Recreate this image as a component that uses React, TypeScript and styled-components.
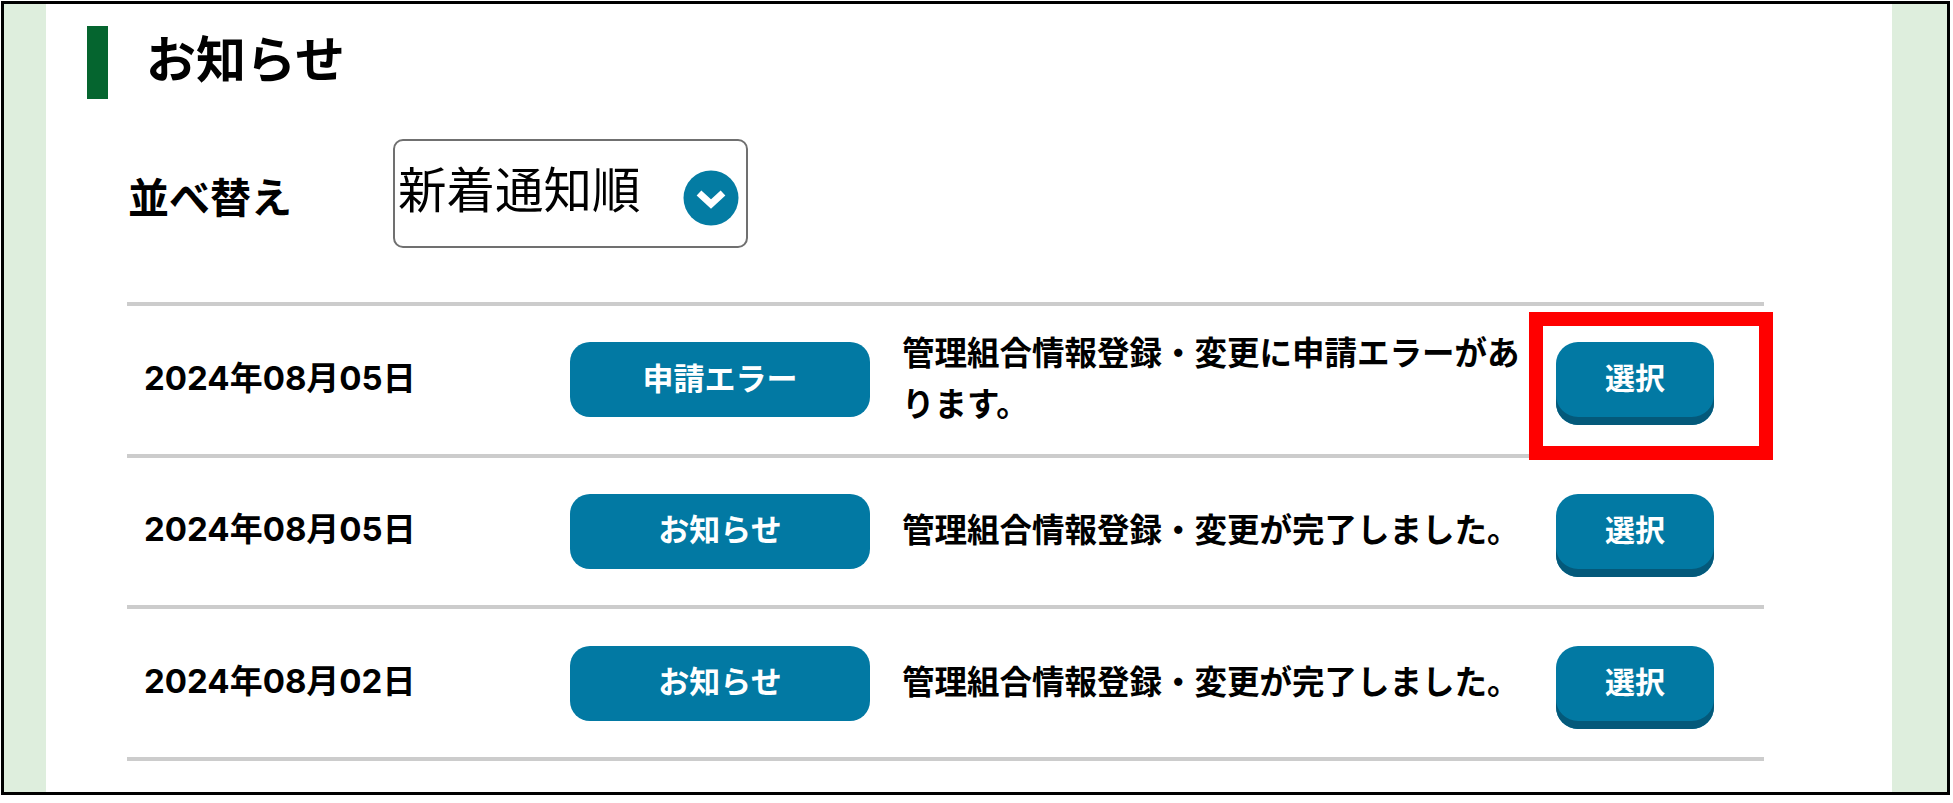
import React from "react";
import styled, { createGlobalStyle } from "styled-components";

const Global = createGlobalStyle`
  html, body { margin: 0; padding: 0; background: #fff; }
  body { font-family: "Noto Sans CJK JP", "Liberation Sans", sans-serif; color: #000; }
`;

const Frame = styled.div`
  position: relative;
  box-sizing: border-box;
  width: 1949px;
  height: 794px;
  margin: 1px 0 0 1px;
  border: 3px solid #000;
  display: flex;
  overflow: hidden;
`;

const Side = styled.div<{ $w: number }>`
  width: ${(p) => p.$w}px;
  flex: none;
  background: #deeedd;
`;

const Main = styled.main`
  flex: 1;
  min-width: 0;
  background: #fff;
  padding-top: 22px;
`;

const Heading = styled.div`
  display: flex;
  align-items: center;
  height: 73px;
  margin-left: 41px;
`;

const HeadingBar = styled.span`
  width: 21px;
  height: 73px;
  background: #05652f;
  flex: none;
`;

const Title = styled.h1`
  margin: 0 0 0 38px;
  padding-bottom: 14px;
  font-size: 50px;
  font-weight: 700;
  line-height: 1;
`;

const SortRow = styled.div`
  display: flex;
  align-items: center;
  margin: 40px 0 0 82px;
`;

const SortLabel = styled.span`
  width: 265px;
  padding-top: 4px;
  font-size: 41px;
  font-weight: 700;
  line-height: 1;
`;

const Select = styled.div`
  box-sizing: border-box;
  width: 355px;
  height: 109px;
  border: 2px solid #707070;
  border-radius: 10px;
  display: flex;
  align-items: center;
  padding: 0 7px 0 3px;
  justify-content: space-between;
`;

const SelectText = styled.span`
  font-size: 48.5px;
  font-weight: 400;
  line-height: 1;
  padding-bottom: 12px;
`;

const Chevron = styled.svg`
  width: 56px;
  height: 56px;
  flex: none;
  margin-top: 8px;
`;

const List = styled.ul`
  list-style: none;
  width: 1637px;
  margin: 54px 0 0 81px;
  padding: 0;
  border-top: 4px solid #ccc;
`;

const Row = styled.li`
  box-sizing: border-box;
  height: 151.67px;
  border-bottom: 4px solid #ccc;
  display: flex;
  align-items: center;
  padding-left: 17px;
`;

const DateText = styled.span`
  width: 426px;
  flex: none;
  padding-bottom: 8px;
  font-family: "Inter", "Noto Sans CJK JP", sans-serif;
  font-size: 33px;
  font-weight: 700;
`;

const Tag = styled.span`
  width: 300px;
  height: 75px;
  box-sizing: border-box;
  padding-bottom: 7px;
  flex: none;
  border-radius: 20px;
  background: #0279a3;
  color: #fff;
  font-size: 31px;
  font-weight: 700;
  display: flex;
  align-items: center;
  justify-content: center;
`;

const Message = styled.p`
  width: 622px;
  flex: none;
  margin: 0 32px 8px 32px;
  font-size: 32.5px;
  font-weight: 700;
  line-height: 51px;
`;

const SelectButton = styled.button`
  box-sizing: border-box;
  width: 158px;
  height: 83px;
  margin-top: 8px;
  padding: 0 0 15px;
  border: none;
  border-radius: 22px;
  background: #0279a3;
  box-shadow: inset 0 -8px 0 #04597a;
  color: #fff;
  font-family: inherit;
  font-size: 30px;
  font-weight: 700;
  line-height: 1;
  flex: none;
`;

const Highlight = styled.div`
  position: absolute;
  left: 1525px;
  top: 308px;
  width: 244px;
  height: 148px;
  box-sizing: border-box;
  border: 14px solid #ff0000;
  pointer-events: none;
`;

const notices = [
  { date: "2024年08月05日", tag: "申請エラー", text: "管理組合情報登録・変更に申請エラーがあります。" },
  { date: "2024年08月05日", tag: "お知らせ", text: "管理組合情報登録・変更が完了しました。" },
  { date: "2024年08月02日", tag: "お知らせ", text: "管理組合情報登録・変更が完了しました。" },
];

export default function App() {
  return (
    <>
      <Global />
      <Frame>
        <Side $w={42} />
        <Main>
          <Heading>
            <HeadingBar />
            <Title>お知らせ</Title>
          </Heading>
          <SortRow>
            <SortLabel>並べ替え</SortLabel>
            <Select>
              <SelectText>新着通知順</SelectText>
              <Chevron viewBox="0 0 56 56">
                <circle cx="28" cy="28" r="27.5" fill="#047ca3" />
                <polyline points="16,23 28,34 40,23" fill="none" stroke="#fff" strokeWidth="7" />
              </Chevron>
            </Select>
          </SortRow>
          <List>
            {notices.map((n, i) => (
              <Row key={i}>
                <DateText>{n.date}</DateText>
                <Tag>{n.tag}</Tag>
                <Message>{n.text}</Message>
                <SelectButton>選択</SelectButton>
              </Row>
            ))}
          </List>
        </Main>
        <Side $w={55} />
        <Highlight />
      </Frame>
    </>
  );
}
